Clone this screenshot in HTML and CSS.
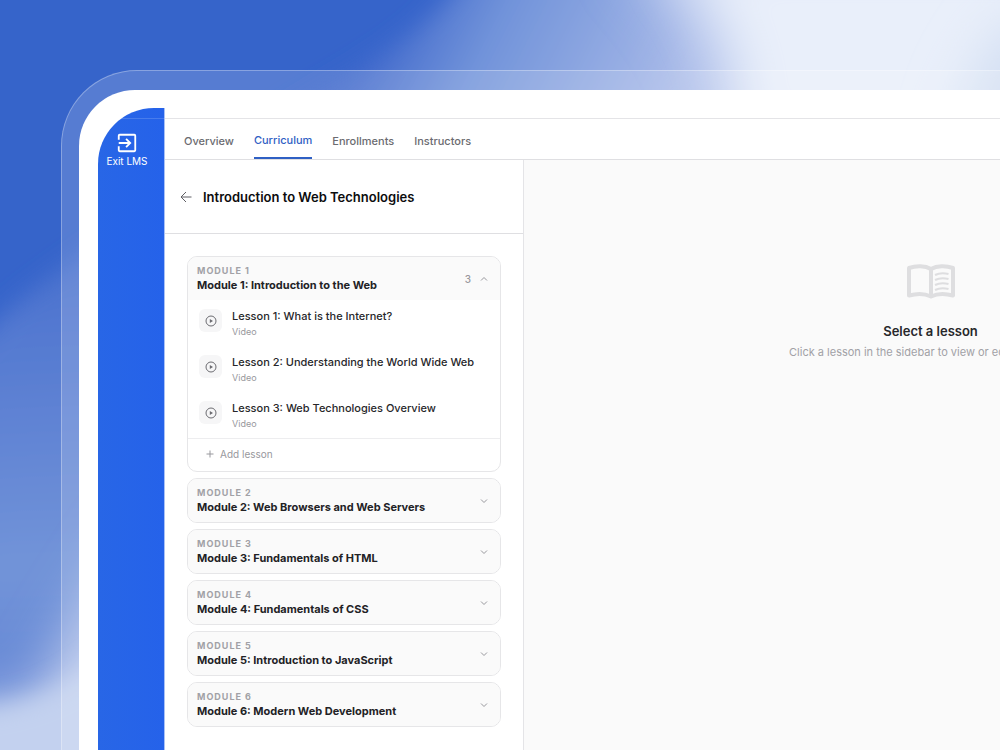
FILE: index.html
```html
<!DOCTYPE html>
<html lang="en">
<head>
<meta charset="utf-8">
<title>Curriculum</title>
<link rel="stylesheet" href="styles.css">
</head>
<body>
<svg class="backdrop" viewBox="0 0 1000 750" preserveAspectRatio="none" aria-hidden="true">
  <defs>
    <filter id="soft" x="-50%" y="-50%" width="200%" height="200%"><feGaussianBlur stdDeviation="12"/></filter>
    <filter id="softer" x="-50%" y="-50%" width="200%" height="200%"><feGaussianBlur stdDeviation="26"/></filter>
    <linearGradient id="haze" gradientUnits="userSpaceOnUse" x1="375" y1="35" x2="640" y2="170">
      <stop offset="0" stop-color="#4068cb"/><stop offset="0.350" stop-color="#7193da"/><stop offset="1" stop-color="#a9bae8"/>
    </linearGradient>
    <linearGradient id="mist" gradientUnits="userSpaceOnUse" x1="30" y1="250" x2="50" y2="700">
      <stop offset="0" stop-color="#4870ce"/><stop offset="0.400" stop-color="#6184d4"/><stop offset="0.700" stop-color="#7294d9"/><stop offset="1" stop-color="#6486d5"/>
    </linearGradient>
  </defs>
  <rect width="1000" height="750" fill="#3664ca"/>
  <path d="M260 130 C350 65 430 45 480 -50 L1100 -50 V160 H260Z" fill="url(#haze)" filter="url(#soft)"/>
  <path d="M620 -50 C670 10 710 40 720 150 H1100 V-50Z" fill="#bccaee" filter="url(#softer)"/>
  <path d="M670 -50 C725 20 740 60 740 150 H1100 V-50Z" fill="#e9effa" filter="url(#softer)"/>
  <path d="M1010 20 C980 60 960 90 950 150 H1100 V20Z" fill="#d3dff3" filter="url(#softer)"/>
  <path d="M120 225 C80 260 20 290 -30 350 V800 H120Z" fill="url(#mist)" filter="url(#soft)"/>
  <path d="M140 520 C100 580 60 640 30 700 H-60 V830 H140Z" fill="#b5c5ea" filter="url(#softer)"/>
  <path d="M130 640 C80 670 50 710 -60 712 V820 H130Z" fill="#c3d1ef" filter="url(#soft)"/>
</svg>
<div class="stage">
  <div class="frame">
    <div class="bezel">
      <div class="screen">
        <nav class="rail" aria-label="Main">
          <div class="rail-strip"></div>
          <a class="exit" href="#">
            <svg class="exit-icon" viewBox="0 0 24 24" aria-hidden="true"><path d="M3 8.500V4Q3 3 4 3H20Q21 3 21 4V20Q21 21 20 21H4Q3 21 3 20V15.500M3 12H15M11 7.500L15.500 12L11 16.500"/></svg>
            <span>Exit LMS</span>
          </a>
        </nav>
        <div class="workspace">
          <div class="topstrip"></div>
          <nav class="tabs" aria-label="Course">
            <a class="tab" href="#">Overview</a>
            <a class="tab tab-active" href="#" aria-current="page">Curriculum</a>
            <a class="tab" href="#">Enrollments</a>
            <a class="tab" href="#">Instructors</a>
          </nav>
          <div class="columns">
            <aside class="outline">
              <header class="course">
                <button class="back" type="button" aria-label="Back"><svg viewBox="0 0 12 12" aria-hidden="true"><path d="M11.500 6H1M6 1L1 6L6 11"/></svg></button>
                <h1 class="course-title">Introduction to Web Technologies</h1>
              </header>
              <div class="modules">
                <section class="module">
                  <button class="module-head" type="button" aria-expanded="true">
                    <span class="module-text"><span class="eyebrow">MODULE 1</span><span class="module-title">Module 1: Introduction to the Web</span></span>
                    <span class="count">3</span>
                    <svg class="chevron" viewBox="0 0 8 8" aria-hidden="true"><path d="M1 5.500L4 2.500L7 5.500"/></svg>
                  </button>
                  <ul class="lessons">
                    <li><a class="lesson" href="#"><span class="lesson-icon"><svg viewBox="0 0 12 12" aria-hidden="true"><circle cx="6" cy="6" r="5"/><path d="M4.800 4V8L8 6Z"/></svg></span><span class="lesson-text"><span class="lesson-title">Lesson 1: What is the Internet?</span><span class="lesson-kind">Video</span></span></a></li>
                    <li><a class="lesson" href="#"><span class="lesson-icon"><svg viewBox="0 0 12 12" aria-hidden="true"><circle cx="6" cy="6" r="5"/><path d="M4.800 4V8L8 6Z"/></svg></span><span class="lesson-text"><span class="lesson-title">Lesson 2: Understanding the World Wide Web</span><span class="lesson-kind">Video</span></span></a></li>
                    <li><a class="lesson" href="#"><span class="lesson-icon"><svg viewBox="0 0 12 12" aria-hidden="true"><circle cx="6" cy="6" r="5"/><path d="M4.800 4V8L8 6Z"/></svg></span><span class="lesson-text"><span class="lesson-title">Lesson 3: Web Technologies Overview</span><span class="lesson-kind">Video</span></span></a></li>
                  </ul>
                  <button class="add" type="button"><svg viewBox="0 0 8 8" aria-hidden="true"><path d="M4 0.500V7.500M0.500 4H7.500"/></svg>Add lesson</button>
                </section>
                <section class="module">
                  <button class="module-head" type="button" aria-expanded="false">
                    <span class="module-text"><span class="eyebrow">MODULE 2</span><span class="module-title">Module 2: Web Browsers and Web Servers</span></span>
                    <svg class="chevron" viewBox="0 0 8 8" aria-hidden="true"><path d="M1 2.500L4 5.500L7 2.500"/></svg>
                  </button>
                </section>
                <section class="module">
                  <button class="module-head" type="button" aria-expanded="false">
                    <span class="module-text"><span class="eyebrow">MODULE 3</span><span class="module-title">Module 3: Fundamentals of HTML</span></span>
                    <svg class="chevron" viewBox="0 0 8 8" aria-hidden="true"><path d="M1 2.500L4 5.500L7 2.500"/></svg>
                  </button>
                </section>
                <section class="module">
                  <button class="module-head" type="button" aria-expanded="false">
                    <span class="module-text"><span class="eyebrow">MODULE 4</span><span class="module-title">Module 4: Fundamentals of CSS</span></span>
                    <svg class="chevron" viewBox="0 0 8 8" aria-hidden="true"><path d="M1 2.500L4 5.500L7 2.500"/></svg>
                  </button>
                </section>
                <section class="module">
                  <button class="module-head" type="button" aria-expanded="false">
                    <span class="module-text"><span class="eyebrow">MODULE 5</span><span class="module-title">Module 5: Introduction to JavaScript</span></span>
                    <svg class="chevron" viewBox="0 0 8 8" aria-hidden="true"><path d="M1 2.500L4 5.500L7 2.500"/></svg>
                  </button>
                </section>
                <section class="module">
                  <button class="module-head" type="button" aria-expanded="false">
                    <span class="module-text"><span class="eyebrow">MODULE 6</span><span class="module-title">Module 6: Modern Web Development</span></span>
                    <svg class="chevron" viewBox="0 0 8 8" aria-hidden="true"><path d="M1 2.500L4 5.500L7 2.500"/></svg>
                  </button>
                </section>
              </div>
            </aside>
            <main class="empty">
              <svg class="book" viewBox="0 0 48 36" aria-hidden="true">
                <path class="book-cover" d="M24 5C18 1.500 9 1.500 2 4V31.500C9 29.500 18 29.500 24 32.500C30 29.500 39 29.500 46 31.500V4C39 1.500 30 1.500 24 5ZM24 5V32"/>
                <path class="book-lines" d="M28 11C32 9 37 8.800 41.500 10M28 16C32 14 37 13.800 41.500 15M28 21C32 19 37 18.800 41.500 20M28 26C32 24 37 23.800 41.500 25"/>
              </svg>
              <h2 class="empty-title">Select a lesson</h2>
              <p class="empty-text">Click a lesson in the sidebar to view or edit its content.</p>
            </main>
          </div>
        </div>
      </div>
    </div>
  </div>
</div>
</body>
</html>
```
FILE: styles.css
```css
* { box-sizing: border-box; }
body {
  margin: 0;
  min-height: 100vh;
  overflow: hidden;
  background: #3664ca;
  font-family: Inter, "Liberation Sans", sans-serif;
  color: #18181b;
}
a { color: inherit; text-decoration: none; }
button { font: inherit; color: inherit; border: 0; background: none; padding: 0; text-align: left; }
svg { flex: none; fill: none; stroke: currentColor; }
h1, h2, p, ul { margin: 0; padding: 0; }
ul { list-style: none; }

.backdrop { position: absolute; inset: 0; width: 100%; height: 100%; stroke: none; }
.stage { position: relative; height: 100vh; padding: 70px 0 0 61px; overflow: hidden; }
.frame {
  width: calc(100% + 374px);
  min-height: 100vh;
  padding: 19px 18px 19px 17px;
  border: 1px solid rgba(255, 255, 255, 0.3);
  border-radius: 76px;
  background: rgba(255, 255, 255, 0.16);
}
.bezel { min-height: 100vh; padding: 18px 18px 18px 19px; border-radius: 56px; background: #fff; }
.screen { display: flex; min-height: 100vh; border-radius: 56px 0 0 0; overflow: hidden; background: #fff; }

.rail { flex: none; width: 67px; background: linear-gradient(90deg, #2866e6, #2562ea); border-right: 1px solid #a9c1f6; }
.rail-strip { height: 11px; border-bottom: 1px solid rgba(255, 255, 255, 0.16); }
.exit { display: flex; flex-direction: column; align-items: center; padding: 13px 8px 0 0; color: #fff; font-size: 10px; line-height: 14px; font-weight: 400; white-space: nowrap; }
.exit-icon { width: 22px; height: 22px; stroke-width: 2; }

.workspace { flex: 1; min-width: 0; display: flex; flex-direction: column; }
.topstrip { height: 11px; border-bottom: 1px solid #e4e4e7; }
.tabs { display: flex; gap: 20px; padding: 0 19px; border-bottom: 1px solid #dfdfe2; box-shadow: 0 1px 1px rgba(0, 0, 0, 0.04); }
.tab { padding: 14px 0 8px; border-bottom: 2px solid transparent; font-size: 11px; line-height: 16px; font-weight: 500; color: #6b6b70; }
.tab-active { padding: 13px 0 9px; color: #2f60c4; border-color: #2f60c4; }

.columns { flex: 1; display: flex; }
.outline { flex: none; width: 359px; border-right: 1px solid #e4e4e7; background: #fff; }
.course { display: flex; align-items: center; gap: 11px; height: 74px; padding: 0 15px; border-bottom: 1px solid #dfdfe2; }
.back { display: flex; color: #5f5f64; }
.back svg { width: 12px; height: 12px; }
.course-title { font-size: 13px; line-height: 18px; font-weight: 600; color: #0c0c0e; }

.modules { display: flex; flex-direction: column; gap: 6px; padding: 22px 22px 0; }
.module { border: 1px solid #e6e6e8; border-radius: 10px; background: #fff; overflow: hidden; }
.module-head { display: flex; align-items: center; width: 100%; padding: 7px 12px 7px 9px; background: #fafafa; }
.module-text { flex: 1; display: flex; flex-direction: column; }
.eyebrow { font-size: 9px; line-height: 13px; font-weight: 700; letter-spacing: 1px; color: #a1a1a6; }
.module-title { font-size: 11px; line-height: 16px; font-weight: 700; color: #222225; }
.count { font-size: 10px; font-weight: 500; color: #98989d; padding-right: 9px; }
.chevron { width: 8px; height: 8px; color: #98989d; }

.lesson { display: flex; gap: 10px; height: 46px; padding: 8px 10px 0 11px; }
.lesson-icon { display: flex; align-items: center; justify-content: center; width: 23px; height: 23px; margin-top: 1px; border-radius: 6px; background: #f6f6f7; color: #6b6b70; }
.lesson-icon svg { width: 12px; height: 12px; }
.lesson-icon path { fill: currentColor; stroke: none; }
.lesson-text { display: flex; flex-direction: column; }
.lesson-title { font-size: 11px; line-height: 17px; font-weight: 500; color: #27272a; white-space: nowrap; }
.lesson-kind { font-size: 9px; line-height: 14px; color: #98989d; }
.add { display: flex; align-items: center; gap: 6px; width: 100%; height: 33px; padding: 0 18px 2px; border-top: 1px solid #ededef; font-size: 10px; line-height: 14px; color: #98989d; }
.add svg { width: 8px; height: 8px; }

.empty { flex: 1; display: flex; flex-direction: column; align-items: center; padding-top: 104px; background: #fafafa; }
.book { width: 48px; height: 36px; color: #dedee0; }
.book-cover { stroke-width: 4; stroke-linejoin: round; }
.book-lines { stroke-width: 2; }
.empty-title { padding-top: 22px; font-size: 13px; line-height: 18px; font-weight: 600; color: #27272a; }
.empty-text { padding-top: 4px; font-size: 11px; line-height: 16px; color: #a1a1a6; white-space: nowrap; }
```
